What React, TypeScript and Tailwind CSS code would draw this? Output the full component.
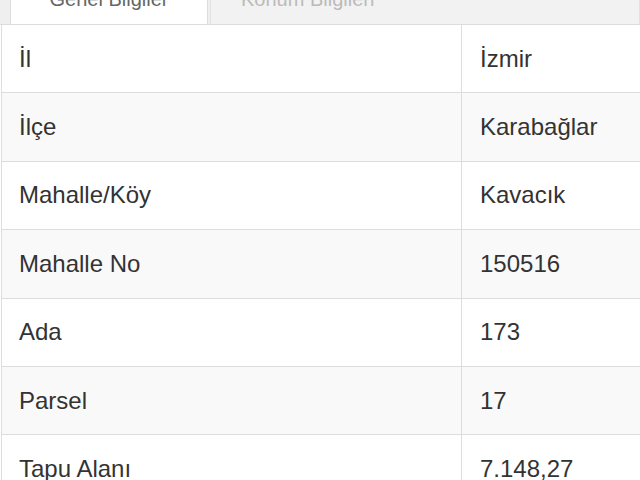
const rows = [
  { label: "İl", value: "İzmir" },
  { label: "İlçe", value: "Karabağlar" },
  { label: "Mahalle/Köy", value: "Kavacık" },
  { label: "Mahalle No", value: "150516" },
  { label: "Ada", value: "173" },
  { label: "Parsel", value: "17" },
  { label: "Tapu Alanı", value: "7.148,27" },
];

export default function App() {
  return (
    <div className="h-[480px] w-[640px] overflow-hidden bg-white font-['Liberation_Sans',Arial,sans-serif] text-[#333]">
      {/* tabs, mostly scrolled out of view */}
      <div className="-mt-[30px] flex h-[55px] items-end border-b border-[#ddd] bg-[#efefef] pl-[10px]">
        <div className="flex h-[52px] w-[198px] items-center justify-center rounded-t border border-b-0 border-[#ddd] bg-white text-[20px] text-[#666]">
          Genel Bilgiler
        </div>
        <div className="ml-[2px] flex h-[52px] flex-1 items-center rounded-t border border-b-0 border-[#e2e2e2] bg-[#f2f2f2] pl-[30px] text-[20px] text-[#bbb]">
          Konum Bilgileri
        </div>
      </div>

      <div className="ml-[1px] border-l border-[#ddd]">
        {rows.map((row, i) => (
          <div
            key={row.label}
            className={`grid h-[68.4px] grid-cols-[460px_1fr] border-b border-[#ddd] text-[24px] ${
              i % 2 === 1 ? "bg-[#f9f9f9]" : "bg-white"
            }`}
          >
            <div className="flex items-center border-r border-[#ddd] pl-[17px]">{row.label}</div>
            <div className="flex items-center pl-[18px]">{row.value}</div>
          </div>
        ))}
      </div>
    </div>
  );
}
